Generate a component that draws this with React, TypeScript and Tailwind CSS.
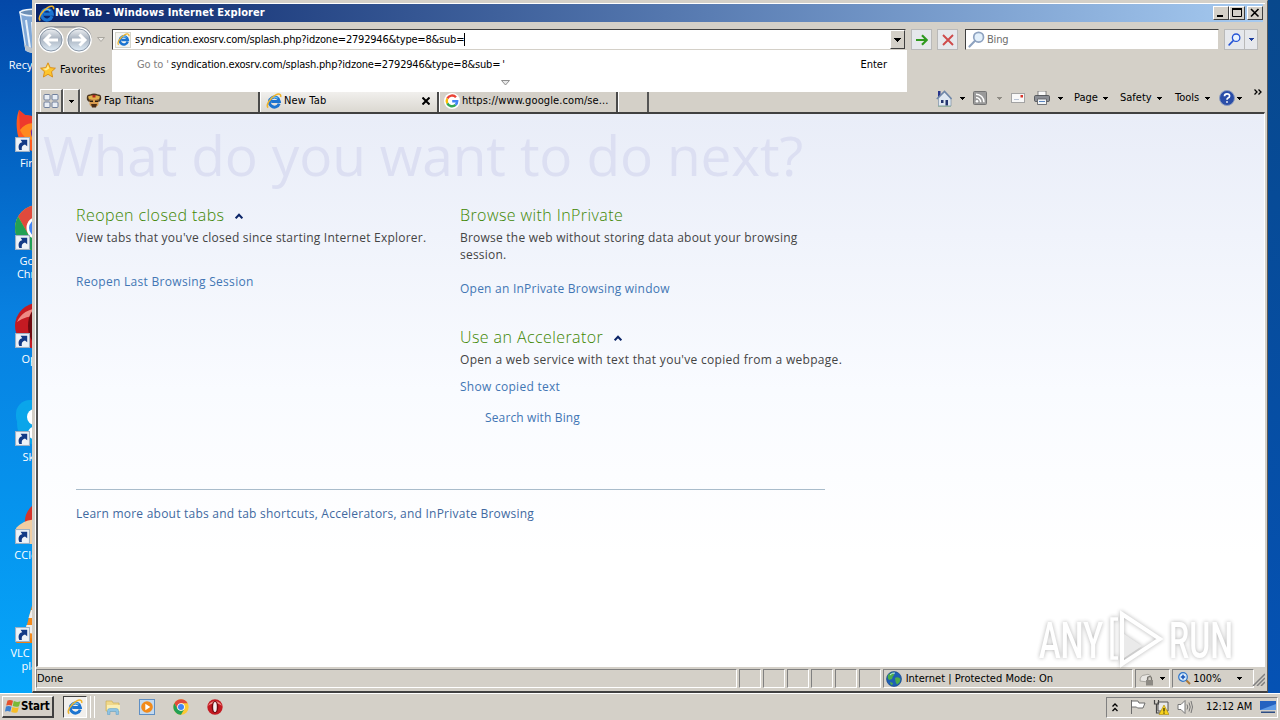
import React from 'react';

const tahoma = "font-['DejaVu_Sans_Condensed','DejaVu_Sans',sans-serif]";
const segoe = "font-['Open_Sans','Noto_Sans',sans-serif]";

/* ---------- icons ---------- */

const IeIcon: React.FC<{ className?: string }> = ({ className = 'w-4 h-4' }) => (
  <svg viewBox="0 0 16 16" className={className} fill="none">
    <path d="M13.2 10.6A5 5 0 1 1 13.4 8.6H5.2" stroke="#1c74d0" strokeWidth="3" />
    <path d="M4.2 7A4.6 4.6 0 0 1 11.6 5.4" stroke="#6cc6f6" strokeWidth="1.2" />
    <path d="M2.2 14.6C-.6 12.6 3.6 5.4 9.4 2.2C12.6.4 15.4.8 14.6 4" stroke="#f0b42a" strokeWidth="1.5" />
  </svg>
);

const ChromeIcon: React.FC<{ className?: string }> = ({ className = 'w-4 h-4' }) => (
  <svg viewBox="0 0 48 48" className={className}>
    <circle cx="24" cy="24" r="23" fill="#fcc934" />
    <path d="M4.1 12.5A23 23 0 0 1 43.9 12.5H24L14 30Z" fill="#e04a3c" />
    <path d="M4.1 12.5A23 23 0 0 0 24 47L34 29.8L24 35L14 29.8Z" fill="#22a055" />
    <circle cx="24" cy="24" r="11.5" fill="#fff" />
    <circle cx="24" cy="24" r="9" fill="#4285f4" />
  </svg>
);

const OperaIcon: React.FC<{ className?: string }> = ({ className = 'w-4 h-4' }) => (
  <svg viewBox="0 0 48 48" className={className}>
    <circle cx="24" cy="24" r="23" fill="#c41a22" />
    <path d="M3 20A23 23 0 0 1 45 20A30 22 0 0 0 3 20Z" fill="#ee8a84" />
    <ellipse cx="24" cy="24" rx="10" ry="18" fill="#6d0a10" />
    <ellipse cx="24" cy="24" rx="5.5" ry="15" fill="#f4f0f0" />
  </svg>
);

const RecycleBinIcon = () => (
  <svg viewBox="0 0 48 48" className="w-12 h-12">
    <path d="M6 4L42 4L36 42Q24 48 12 42Z" fill="#a9c6e4" fillOpacity=".75" stroke="#dce9f5" strokeWidth="1.5" />
    <ellipse cx="24" cy="4.5" rx="18" ry="3.5" fill="#6d8fb5" stroke="#eef5fc" strokeWidth="1.5" />
    <path d="M12 12L16 40M18 14L20 42" stroke="#e8f1fa" strokeWidth="2" />
    <path d="M10 36Q24 46 38 36L36 43Q24 48 12 43Z" fill="#b9c2cb" />
  </svg>
);

const FirefoxIcon = () => (
  <svg viewBox="0 0 48 48" className="w-12 h-12">
    <path d="M3 24C2 16 3 9 5 4L11 9L18 10C24 4 34 4 40 12C48 24 44 46 24 46C12 46 4 36 3 24Z" fill="#ff5a1f" />
    <path d="M5 4L11 9L18 10L22 16L6 24Z" fill="#ee3a2c" />
    <path d="M6 24Q14 14 24 19L16 25L20 34Q10 34 6 24Z" fill="#ff8a1e" />
    <circle cx="26" cy="27" r="9" fill="#5a2fb0" />
  </svg>
);

const SkypeIcon = () => (
  <svg viewBox="0 0 48 48" className="w-12 h-12">
    <rect x="2" y="0" width="30" height="30" rx="14" fill="#0aa5ea" />
    <circle cx="24" cy="24" r="21" fill="#0aa5ea" />
    <circle cx="21" cy="17" r="8" fill="#fff" />
    <circle cx="20" cy="33" r="6" fill="#fff" />
  </svg>
);

const CCleanerIcon = () => (
  <svg viewBox="0 0 48 48" className="w-12 h-12">
    <path d="M42 10A17 17 0 1 0 42 38" fill="none" stroke="#d5342b" strokeWidth="9" />
    <path d="M2 30Q12 20 22 22L30 34L20 46H6Z" fill="#f1cda2" />
  </svg>
);

const VlcIcon = () => (
  <svg viewBox="0 0 48 48" className="w-12 h-12">
    <path d="M8 36L40 36L46 47H2Z" fill="#f08010" />
    <path d="M20 2H28L38 40Q24 46 10 40Z" fill="#f58a1c" />
    <path d="M17 14H31L33.500 22H14.500ZM12.500 29H35.500L37 36Q24 40 11 36Z" fill="#eee" />
  </svg>
);

const ShortcutArrow = () => (
  <svg viewBox="0 0 14 14" className="absolute left-[1px] top-[31px] w-[15px] h-[15px]">
    <rect x=".5" y=".5" width="13" height="13" fill="#eef3f8" stroke="#9fb1c4" />
    <path d="M4 12.200C2.400 8 4 5.300 6.800 4.800L5.200 2.600H11.400V8.600L9.300 6.900C7 7.600 5.800 9 6.400 12.200Z" fill="#123a86" />
  </svg>
);

const NavButtons = () => (
  <svg viewBox="0 0 56 28" className="w-14 h-7">
    <defs>
      <linearGradient id="orb" x1="0" y1="0" x2="0" y2="1">
        <stop offset="0" stopColor="#f4f6f8" />
        <stop offset=".45" stopColor="#a9b3c0" />
        <stop offset="1" stopColor="#e4f1fb" />
      </linearGradient>
    </defs>
    <path d="M2 12Q4 1 14 1H42Q52 1 54 12" fill="none" stroke="#8c8f94" strokeWidth="1.500" />
    <circle cx="14" cy="14" r="12" fill="url(#orb)" stroke="#fff" strokeWidth="1.500" />
    <circle cx="42" cy="14" r="12" fill="url(#orb)" stroke="#fff" strokeWidth="1.500" />
    <circle cx="14" cy="14" r="11" fill="none" stroke="#8b98a8" strokeWidth="1" />
    <circle cx="42" cy="14" r="11" fill="none" stroke="#8b98a8" strokeWidth="1" />
    <path d="M21 14H8M13.500 8.500L8 14L13.500 19.500M35 14H48M42.500 8.500L48 14L42.500 19.500" fill="none" stroke="#fff" strokeWidth="3" />
  </svg>
);

const Caret: React.FC<{ className?: string }> = ({ className = 'text-black' }) => (
  <svg viewBox="0 0 5 3" className={`w-[5px] h-[3px] shrink-0 ${className}`} shapeRendering="crispEdges">
    <path d="M0 0H5V1H4V2H3V3H2V2H1V1H0Z" fill="currentColor" />
  </svg>
);

const Magnifier: React.FC<{ className: string; color: string; glass: string }> = ({ className, color, glass }) => (
  <svg viewBox="0 0 16 16" className={className} fill="none">
    <circle cx="10" cy="5.800" r="4.600" fill={glass} stroke={color} strokeWidth="1.600" />
    <path d="M6.600 9.200L1.400 14.600" stroke={color} strokeWidth="2" strokeLinecap="round" />
  </svg>
);

const StarIcon = () => (
  <svg viewBox="0 0 16 16" className="w-4 h-4">
    <path d="M8 .8L10.200 5.600L15.400 6.200L11.500 9.700L12.600 15L8 12.300L3.400 15L4.500 9.700L.6 6.200L5.800 5.600Z" fill="#fdc62e" stroke="#d98a12" strokeWidth=".9" />
    <path d="M8 2.800L9.300 6.400L6 8.500L2.800 6.800L6.400 6.300Z" fill="#ffec9a" />
  </svg>
);

const QuickTabsIcon = () => (
  <svg viewBox="0 0 16 14" className="w-4 h-3.5" fill="#e8edf4" stroke="#6f7f9c">
    <rect x="1" y=".5" width="6" height="5.500" rx="1" />
    <rect x="9" y=".5" width="6" height="5.500" rx="1" />
    <rect x="1" y="8" width="6" height="5.500" rx="1" />
    <rect x="9" y="8" width="6" height="5.500" rx="1" />
  </svg>
);

const TitanIcon = () => (
  <svg viewBox="0 0 16 16" className="w-4 h-4">
    <path d="M1 7Q0 1 4 1.500Q8-.5 12 1.500Q16 1 15 7L13 9H3Z" fill="#4a3420" />
    <path d="M2 3.500Q8 1 14 3.500L13 6.500H3Z" fill="#e0b04a" />
    <rect x="3.500" y="6" width="9" height="7.500" rx="3" fill="#d79a4e" />
    <path d="M4 7.500H7V9H4ZM9 7.500H12V9H9Z" fill="#2a1c12" />
    <path d="M5 11H11L10 14.500H6Z" fill="#4b2d18" />
    <path d="M6.500 2H9.500V4.500H6.500Z" fill="#b3261e" />
  </svg>
);

const GoogleIcon = () => (
  <svg viewBox="0 0 16 16" className="w-4 h-4">
    <circle cx="8" cy="8" r="8" fill="#fff" />
    <g fill="none" strokeWidth="2.400">
      <path d="M12 4.200A5.300 5.300 0 0 0 3.300 5.600" stroke="#ea4335" />
      <path d="M3.300 5.600A5.300 5.300 0 0 0 3.300 10.400" stroke="#fbbc05" />
      <path d="M3.300 10.400A5.300 5.300 0 0 0 11.600 11.900" stroke="#34a853" />
      <path d="M11.600 11.900A5.300 5.300 0 0 0 13.200 8.200H8.200" stroke="#4285f4" />
    </g>
  </svg>
);

const HomeIcon = () => (
  <svg viewBox="0 0 16 17" className="w-4 h-[17px]">
    <path d="M2 1H4.500V6L2 8Z" fill="#27348b" />
    <path d="M8.500 1.500L15 8V16H2.500V8Z" fill="#dfe8f2" stroke="#7b8fa8" strokeWidth=".7" />
    <path d="M.8 9L8.500 1.500L15.500 9" fill="none" stroke="#6f87a8" strokeWidth="1.600" />
    <path d="M5 10H7.500V13H5ZM9.500 10H12V15.500H9.500Z" fill="#23356f" />
    <path d="M2 16.300H15" stroke="#8fae9a" />
  </svg>
);

const FeedIcon = () => (
  <svg viewBox="0 0 14 14" className="w-3.5 h-3.5" fill="none">
    <rect x=".5" y=".5" width="13" height="13" rx="1" fill="#9a9a9a" stroke="#757575" />
    <circle cx="4" cy="10.200" r="1.300" fill="#fff" />
    <path d="M3 6.500A4.700 4.700 0 0 1 7.700 11.300M3 3.200A8 8 0 0 1 11 11.300" stroke="#fff" strokeWidth="1.500" />
  </svg>
);

const MailIcon = () => (
  <svg viewBox="0 0 14 10" className="w-3.5 h-2.5">
    <rect x=".5" y=".5" width="13" height="9" fill="#f8f8f8" stroke="#a3a3a3" />
    <rect x="9.500" y="2" width="2.500" height="2.500" fill="#d8362c" />
    <path d="M3 6.500H8" stroke="#b9c4d6" />
  </svg>
);

const PrinterIcon = () => (
  <svg viewBox="0 0 16 14" className="w-4 h-3.5">
    <path d="M4 0H12V5H4Z" fill="#fafafa" stroke="#6b6b6b" strokeWidth=".8" />
    <rect x=".5" y="4.500" width="15" height="6" rx="1.200" fill="#8b8e95" stroke="#44474d" strokeWidth=".8" />
    <path d="M3.500 8H12.500V13.500H3.500Z" fill="#f2f5f8" stroke="#55585e" strokeWidth=".8" />
    <path d="M5 10.500H11" stroke="#5a86c0" />
  </svg>
);

const HelpIcon = () => (
  <svg viewBox="0 0 16 16" className="w-4 h-4">
    <circle cx="8" cy="8" r="7.500" fill="#2a4da8" stroke="#8c9cc0" />
    <path d="M5.500 6.200Q5.500 3.800 8 3.800Q10.600 3.800 10.600 6Q10.600 7.300 9 8.100Q8 8.700 8 9.800M8 11.200V12.800" fill="none" stroke="#fff" strokeWidth="1.700" />
  </svg>
);

const GlobeIcon = () => (
  <svg viewBox="0 0 16 16" className="w-4 h-4">
    <circle cx="8" cy="8" r="7.500" fill="#1e5fb4" stroke="#123f80" strokeWidth=".6" />
    <path d="M2 4Q5 1 8 1.500Q9 4 7 5L6 8L3 9Q1 7 2 4ZM9 7Q12 5 14.500 8Q14 12 11 13.500Q9 11 9 7ZM4 11L7 12L6 14.500Q4 13.500 4 11Z" fill="#4fae4a" />
    <path d="M4 4A6 6 0 0 1 9 2" stroke="#bfe4f8" fill="none" />
  </svg>
);

const WindowsFlag = () => (
  <svg viewBox="0 0 16 15" className="w-4 h-[15px]">
    <path d="M2.500 1.500Q5 .2 8 1.700L6.800 6.700Q4 5.300 1.200 6.600Z" fill="#e5512c" />
    <path d="M8.800 2.100Q12 3.600 15.400 2.200L14 7.200Q11 8.400 7.700 7Z" fill="#7ab938" />
    <path d="M1 7.600Q3.600 6.400 6.500 7.700L5.300 12.700Q2.500 11.300 -.1 12.600Z" fill="#3d80cf" />
    <path d="M7.400 8.100Q10.500 9.500 13.800 8.200L12.400 13.200Q9.500 14.400 6.200 13Z" fill="#f6bd26" />
  </svg>
);

const FolderIcon = () => (
  <svg viewBox="0 0 16 16" className="w-4 h-4">
    <path d="M1 2H7L8 4H14V12H1Z" fill="#f0d88a" stroke="#c7a94c" strokeWidth=".6" />
    <path d="M2 6H15V12H2Z" fill="#faeeb4" />
    <path d="M2.500 15.500V11.500Q2.500 9.500 5 9.500H11Q13.500 9.500 13.500 11.500V15.500H11V12.500H5V15.500Z" fill="#8fc4e4" stroke="#5d9fc6" strokeWidth=".5" />
  </svg>
);

const MediaPlayerIcon = () => (
  <svg viewBox="0 0 16 16" className="w-4 h-4">
    <rect x=".5" y=".5" width="15" height="15" fill="#c3d9ef" stroke="#5f8fc4" />
    <circle cx="8" cy="8" r="5.800" fill="#f28a1a" />
    <path d="M6.300 4.800L11.300 8L6.300 11.200Z" fill="#fff" />
  </svg>
);

/* ---------- desktop ---------- */

const shortcuts = [
  { label: 'Recycle Bin', icon: <RecycleBinIcon />, arrow: false },
  { label: 'Firefox', icon: <FirefoxIcon />, arrow: true },
  { label: 'Google Chrome', icon: <ChromeIcon className="w-12 h-12" />, arrow: true },
  { label: 'Opera', icon: <OperaIcon className="w-12 h-12" />, arrow: true },
  { label: 'Skype', icon: <SkypeIcon />, arrow: true },
  { label: 'CCleaner', icon: <CCleanerIcon />, arrow: true },
  { label: 'VLC media player', icon: <VlcIcon />, arrow: true },
];

const Desktop = () => (
  <div className="w-8 shrink-0 overflow-hidden bg-linear-to-b from-[#0448a8] via-[#0880e0] via-45% to-[#06a6fa]">
    {shortcuts.map((s) => (
      <div key={s.label} className="w-[75px] h-[98px] pt-2 flex flex-col items-center">
        <div className="relative w-12 h-[50px] shrink-0">
          {s.icon}
          {s.arrow && <ShortcutArrow />}
        </div>
        <span className={`${segoe} w-[62px] text-center text-[11px] leading-[13px] text-white`}>{s.label}</span>
      </div>
    ))}
  </div>
);

/* ---------- browser window ---------- */

const CaptionButton: React.FC<{ className?: string; children: React.ReactNode }> = ({ className = '', children }) => (
  <div className={`w-4 h-3.5 bg-[#d4d0c8] border border-t-white border-l-white border-r-[#404040] border-b-[#404040] ${className}`}>
    <svg viewBox="0 0 14 12" className="w-3.5 h-3" fill="none" stroke="#000">
      {children}
    </svg>
  </div>
);

const TitleBar = () => (
  <div className="h-[18px] mr-0.5 shrink-0 flex items-center pl-0.5 bg-linear-to-r from-[#0a246a] to-[#a6caf0]">
    <IeIcon className="w-[17px] h-[17px]" />
    <span className={`${tahoma} pt-px font-bold text-[11px] text-white whitespace-nowrap tracking-[0.07px]`}>
      New Tab - Windows Internet Explorer
    </span>
    <div className="ml-auto flex">
      <CaptionButton>
        <path d="M3 9H9" strokeWidth="2" />
      </CaptionButton>
      <CaptionButton>
        <path d="M2.500 2V9.500H11.500V2M2 2H12" strokeWidth="1" />
        <path d="M2 2H12" strokeWidth="2" />
      </CaptionButton>
      <CaptionButton className="ml-0.5">
        <path d="M3 2L10.500 9.500M10.500 2L3 9.500" strokeWidth="1.600" />
      </CaptionButton>
    </div>
  </div>
);

const SquareButton: React.FC<{ className: string; children: React.ReactNode }> = ({ className, children }) => (
  <div className={`h-[21px] flex items-center justify-center bg-[#e6e8ec] border border-[#b9b9b9] ${className}`}>{children}</div>
);

const AddressBar = () => (
  <div className="relative w-[794px] h-[21px] ml-[7px] flex items-center bg-white border border-[#404040] border-b-[#d4d0c8] border-r-[#d4d0c8]">
    <div className="w-4 h-4 ml-0.5 flex items-center justify-center bg-[#f4f4f0] border border-[#d5d5cc]">
      <IeIcon className="w-[13px] h-[13px]" />
    </div>
    <span className={`${tahoma} ml-[4px] pt-px text-[11px] whitespace-nowrap tracking-[-0.2px]`}>
      syndication.exosrv.com/splash.php?idzone=2792946&amp;type=8&amp;sub=
    </span>
    <div className="w-px h-[13px] bg-black" />
    <div className="ml-auto w-[15px] h-[19px] flex items-center justify-center bg-[#d4d0c8] border border-t-white border-l-white border-r-[#404040] border-b-[#404040]">
      <svg viewBox="0 0 7 4" className="w-[7px] h-1 shrink-0" shapeRendering="crispEdges">
        <path d="M0 0H7V1H6V2H5V3H4V4H3V3H2V2H1V1H0Z" />
      </svg>
    </div>

    {/* autocomplete popup */}
    <div className={`${tahoma} absolute z-10 -left-px top-[20px] w-[795px] h-[42px] bg-white text-[11px] leading-[14px]`}>
      <div className="flex items-center pt-2 pl-[25px] pr-5">
        <span className="text-[#808080] tracking-[-0.1px]">Go to '</span>
        <span className="ml-0.5 tracking-[-0.2px]">syndication.exosrv.com/splash.php?idzone=2792946&amp;type=8&amp;sub=</span>
        <span className="ml-0.5">'</span>
        <span className="ml-auto">Enter</span>
      </div>
      <svg viewBox="0 0 9 6" className="w-[9px] h-1.5 mt-2 ml-[389px]">
        <path d="M.5 .5H8.500L4.500 5Z" fill="#e8e8e8" stroke="#8f8f8f" />
      </svg>
    </div>
  </div>
);

const NavBar = () => (
  <div className="h-9 shrink-0 flex items-center pl-px pb-px">
    <NavButtons />
    <svg viewBox="0 0 8 5" className="w-2 h-[5px] ml-1">
      <path d="M.5 .5H7.500L4 4.500Z" fill="#eceae6" stroke="#aaa7a0" />
    </svg>
    <AddressBar />
    <SquareButton className="w-[21px] ml-[5px]">
      <svg viewBox="0 0 12 12" className="w-3 h-3" fill="none" stroke="#2f9a1f" strokeWidth="2.200">
        <path d="M0 6H10.500M6 1.200L10.800 6L6 10.800" />
      </svg>
    </SquareButton>
    <SquareButton className="w-[21px] ml-[5px]">
      <svg viewBox="0 0 12 12" className="w-3 h-3" fill="none" stroke="#cf4a4a" strokeWidth="1.900">
        <path d="M1 1L11 11M11 1L1 11" />
      </svg>
    </SquareButton>
    <div className="w-[254px] h-[21px] ml-[7px] flex items-center bg-white border border-[#404040] border-b-[#d4d0c8] border-r-[#d4d0c8]">
      <Magnifier className="w-[17px] h-[17px] ml-0.5" color="#8fa3c0" glass="#e3f0fb" />
      <span className={`${tahoma} ml-0.5 pt-0.5 text-[11px] text-[#6d6d6d] tracking-[-0.2px]`}>Bing</span>
    </div>
    <SquareButton className="w-[21px] ml-[5px]">
      <Magnifier className="w-[13px] h-[13px]" color="#2453d6" glass="#e8f2ff" />
    </SquareButton>
    <SquareButton className="w-[14px] -ml-px">
      <Caret className="text-[#1f3f9e]" />
    </SquareButton>
  </div>
);

const tabs = [
  { title: 'Fap Titans', icon: <TitanIcon />, active: false, width: 'w-[180px] pl-[5px]', text: 'pt-0.5' },
  { title: 'New Tab', icon: <IeIcon />, active: true, width: 'w-[179px] pl-[5px]', text: 'pt-px -ml-px tracking-[0.15px]' },
  { title: 'https://www.google.com/se...', icon: <GoogleIcon />, active: false, width: 'w-[179px] pl-[4px]', text: 'pt-0.5 tracking-[0.1px]' },
];

const TabStrip = () => (
  <div className={`${tahoma} flex items-end h-[23px] text-[11px] text-black`}>
    <div className="w-[23px] h-full ml-1 flex items-center justify-center border border-white border-b-0 border-r-2 border-r-[#555]">
      <QuickTabsIcon />
    </div>
    <div className="w-[17px] h-full flex items-center justify-center border-t border-l border-white border-r-2 border-r-[#555]">
      <Caret />
    </div>
    {tabs.map((tab) => (
      <div
        key={tab.title}
        className={`${tab.width} h-full flex items-center border-l border-l-white border-r-2 border-r-[#4a4a4a] ${
          tab.active ? 'bg-linear-to-b from-[#f4f3f1] to-[#dbd8d1]' : ''
        }`}
      >
        {tab.icon}
        <span className={`ml-[2px] whitespace-nowrap ${tab.text}`}>{tab.title}</span>
        {tab.active && (
          <svg viewBox="0 0 8 8" className="w-2 h-2 ml-auto mr-[7px]" stroke="#000" strokeWidth="2">
            <path d="M.5 .5L7.500 7.500M7.500 .5L.5 7.500" />
          </svg>
        )}
      </div>
    ))}
    <div className="w-[31px] h-full border-l border-l-white border-r-2 border-r-[#555]" />
  </div>
);

const CommandBar = () => (
  <div className={`${tahoma} ml-auto h-7 flex items-center text-[11px] text-black`}>
    <HomeIcon />
    <Caret className="ml-[8px]" />
    <div className="ml-[8px]"><FeedIcon /></div>
    <Caret className="ml-[10px] text-[#8f8c85]" />
    <div className="ml-[9px]"><MailIcon /></div>
    <div className="ml-[9px]"><PrinterIcon /></div>
    <Caret className="ml-[8px]" />
    <span className="ml-[11px] w-[25px]">Page</span>
    <Caret className="ml-1" />
    <span className="ml-[12px] w-[33px]">Safety</span>
    <Caret className="ml-[4px]" />
    <span className="ml-[13px] w-[26px]">Tools</span>
    <Caret className="ml-[4px]" />
    <div className="ml-[9px]"><HelpIcon /></div>
    <Caret className="ml-[2px]" />
    <svg viewBox="0 0 8 6" className="w-2 h-1.5 ml-3 mr-[3px] -mt-3" fill="none" stroke="#000" strokeWidth="1.300">
      <path d="M.5 .5L3 3L.5 5.500M4.500 .5L7 3L4.500 5.500" />
    </svg>
  </div>
);

const SectionTitle: React.FC<{ collapsible?: boolean; className?: string; children: React.ReactNode }> = ({
  collapsible,
  className = '',
  children,
}) => (
  <h2 className={`flex items-center text-[16px] leading-[22px] font-light text-[#3d8600] tracking-[0.42px] whitespace-nowrap ${className}`}>
    {children}
    {collapsible && (
      <svg viewBox="0 0 8 6" className="w-2 h-1.5 ml-[11px] mt-[2px]" fill="none" stroke="#0b2468" strokeWidth="2">
        <path d="M.7 5.300L4 1.800L7.300 5.300" />
      </svg>
    )}
  </h2>
);

const NewTabPage = () => (
  <div className={`${segoe} grow overflow-hidden bg-linear-to-b from-[#e9edf8] via-[#f9fbff] via-50% to-white to-80% text-[12px] leading-[17px] tracking-[0.23px] text-[#444]`}>
    <h1 className="h-[90px] pl-[5px] pt-[6px] text-[55px] leading-[70px] text-[#dcdff2] whitespace-nowrap tracking-[-0.15px]">
      What do you want to do next?
    </h1>
    <div className="flex pl-[38px]">
      <div className="w-[384px]">
        <SectionTitle collapsible>Reopen closed tabs</SectionTitle>
        <p className="mt-[3px] whitespace-nowrap">View tabs that you've closed since starting Internet Explorer.</p>
        <p className="mt-[27px] tracking-[0.3px] text-[#4276b4]">Reopen Last Browsing Session</p>
      </div>
      <div>
        <SectionTitle>Browse with InPrivate</SectionTitle>
        <p className="mt-[3px] whitespace-nowrap">
          Browse the web without storing data about your browsing
          <br />
          session.
        </p>
        <p className="mt-[17px] text-[#4276b4]">Open an InPrivate Browsing window</p>
        <SectionTitle collapsible className="mt-[29px]">Use an Accelerator</SectionTitle>
        <p className="mt-[3px] whitespace-nowrap tracking-[0.3px]">Open a web service with text that you've copied from a webpage.</p>
        <p className="mt-[10px] tracking-[0.28px] text-[#4276b4]">Show copied text</p>
        <p className="mt-[14px] pl-[25px] tracking-[0.13px] text-[#4276b4]">Search with Bing</p>
      </div>
    </div>
    <div className="w-[749px] mt-[63px] ml-[38px] pt-[15px] border-t border-[#a9bccb] text-[#41699f]">
      Learn more about tabs and tab shortcuts, Accelerators, and InPrivate Browsing
    </div>
  </div>
);

const StatusCell: React.FC<{ className: string; children?: React.ReactNode }> = ({ className, children }) => (
  <div className={`h-[19px] flex items-center border border-[#808080] border-r-white border-b-white ${className}`}>{children}</div>
);

const StatusBar = () => (
  <div className={`${tahoma} h-5 mt-[2px] shrink-0 flex items-start gap-[2px] text-[11px] text-black whitespace-nowrap`}>
    <StatusCell className="w-[702px]">
      <span className="pt-px">Done</span>
    </StatusCell>
    {[0, 1, 2, 3, 4, 5].map((i) => (
      <StatusCell key={i} className="w-[22px]" />
    ))}
    <StatusCell className="w-[251px] pl-0.5">
      <GlobeIcon />
      <span className="ml-1 pt-px tracking-[0.02px]">Internet | Protected Mode: On</span>
    </StatusCell>
    <StatusCell className="w-[35px] pl-[3px]">
      <svg viewBox="0 0 16 14" className="w-4 h-3.5">
        <path d="M1 9Q1 3 6 3Q9 1 12 4L9 6V10Z" fill="#e9e7e3" stroke="#9b9892" strokeWidth=".8" />
        <path d="M8.500 8V6.500Q8.500 4.500 10.500 4.500Q12.500 4.500 12.500 6.500V8" fill="none" stroke="#77746e" strokeWidth="1.200" />
        <rect x="7" y="8" width="7" height="5.500" fill="#8d8a84" />
      </svg>
      <Caret className="ml-[5px]" />
    </StatusCell>
    <StatusCell className="w-[82px] pl-[5px]">
      <svg viewBox="0 0 13 13" className="w-[13px] h-[13px]" fill="none">
        <path d="M8 8L12 12" stroke="#b07a35" strokeWidth="2" />
        <circle cx="5" cy="5" r="4.300" fill="#d9ecfb" stroke="#2e74c9" strokeWidth="1.200" />
        <path d="M5 2.800V7.200M2.800 5H7.200" stroke="#1653b8" strokeWidth="1.500" />
      </svg>
      <span className="ml-0.5 pt-px">100%</span>
      <Caret className="ml-auto mr-[11px]" />
    </StatusCell>
    <svg viewBox="0 0 13 13" className="w-[13px] h-[13px] mt-1 -ml-1" stroke="#808080" strokeWidth="1.500">
      <path d="M13 1L1 13M13 5L5 13M13 9L9 13" />
    </svg>
  </div>
);

const BrowserWindow = () => (
  <div className="w-[1236px] h-[693px] shrink-0 flex flex-col pt-0.5 px-0.5 bg-[#d4d0c8] border-l border-r border-t border-b-2 border-l-[#d4d0c8] border-t-[#d4d0c8] border-r-[#5a5a5a] border-b-[#404040]">
    <div className="grow flex flex-col border-t border-l border-white">
      <TitleBar />
      <NavBar />
      <div className="flex h-6 shrink-0 items-center pl-1">
        <StarIcon />
        <span className={`${tahoma} ml-1 pt-px text-[11px] text-black tracking-[0.1px]`}>Favorites</span>
      </div>
      <div className="flex h-[30px] shrink-0 items-end">
        <TabStrip />
        <CommandBar />
      </div>
      <div className="h-[555px] shrink-0 flex flex-col border-t-2 border-l-2 border-b border-r border-t-[#404040] border-l-[#505050] border-b-white border-r-white">
        <NewTabPage />
      </div>
      <StatusBar />
    </div>
  </div>
);

/* ---------- taskbar ---------- */

const Taskbar = () => (
  <div className={`${tahoma} h-[27px] flex items-center bg-[#d4d0c8] border-t border-white pl-0.5 text-[11px] text-black`}>
    <div className="w-[52px] h-[22px] flex items-center pl-0.5 border border-t-white border-l-white border-r-2 border-b-2 border-r-[#404040] border-b-[#404040]">
      <WindowsFlag />
      <span className="pt-px font-bold text-[11.5px] tracking-[-0.2px]">Start</span>
    </div>
    <div className="w-[24px] h-[22px] ml-[9px] flex items-center justify-center bg-[#f1efec] border border-t-[#404040] border-l-[#404040] border-white">
      <IeIcon />
    </div>
    <div className="w-1 h-[22px] border-r border-white" />
    <div className="w-1 h-[22px] border-r border-white" />
    <div className="flex ml-[10px] gap-[18px]">
      <FolderIcon />
      <MediaPlayerIcon />
      <ChromeIcon />
      <OperaIcon />
    </div>
    <div className="ml-auto mr-[2px] w-[172px] h-[21px] flex items-center border border-[#808080] border-r-white border-b-white">
      <svg viewBox="0 0 6 9" className="w-1.5 h-[9px] ml-[5px]" fill="none" stroke="#000" strokeWidth="1.300">
        <path d="M.5 3.500L3 1L5.500 3.500M.5 8L3 5.500L5.500 8" />
      </svg>
      <svg viewBox="0 0 16 16" className="w-4 h-4 ml-[12px]" fill="#fff" stroke="#6d6d6d">
        <path d="M1.500 1V15M1.500 2H8L9 4H15L13 9H7.500L6.500 8H1.500" />
      </svg>
      <svg viewBox="0 0 16 16" className="w-4 h-4 ml-[7px]">
        <path d="M5 3H15V12H5Z" fill="#e9e9e9" stroke="#555" />
        <path d="M1.500 1V5H5.500V1M3.500 5V14H8" fill="none" stroke="#444" strokeWidth="1.200" />
        <path d="M11 6L16 15.500H6Z" fill="#f8d21c" stroke="#a88808" strokeWidth=".6" />
        <path d="M11 9V12.500M11 13.500V14.700" stroke="#000" />
      </svg>
      <svg viewBox="0 0 16 16" className="w-4 h-4 ml-[8px]" fill="none" stroke="#777">
        <path d="M1 5.500H4L8 1.500V14.500L4 10.500H1Z" fill="#fff" />
        <path d="M10 5.500Q11.500 8 10 10.500M12 3.500Q14.500 8 12 12.500M14 2Q17 8 14 14" />
      </svg>
      <span className="ml-[13px] pt-px whitespace-nowrap tracking-[-0.1px]">12:12 AM</span>
      <svg viewBox="0 0 16 12" className="w-4 h-3 ml-auto mr-[1px]">
        <rect width="16" height="9" fill="#2462c0" />
        <path d="M0 9L16 3V9Z" fill="#5e9be6" />
        <path d="M1 10.500H15V12H1Z" fill="#2c4d84" />
      </svg>
    </div>
  </div>
);

const Watermark = () => (
  <svg
    viewBox="0 0 210 70"
    className="absolute left-[1034px] top-[604px] w-[210px] h-[70px] drop-shadow-[0_0_2px_rgba(0,0,0,0.4)] opacity-75 font-['Roboto',sans-serif] font-medium"
  >
    <g fill="#fff" fontSize="50">
      <text x="5" y="54" textLength="64" lengthAdjust="spacingAndGlyphs">ANY</text>
      <text x="135" y="54" textLength="64" lengthAdjust="spacingAndGlyphs">RUN</text>
    </g>
    <g fill="none" stroke="#fff" strokeWidth="4">
      <path d="M88 10L126 35L88 60Z" />
      <path d="M84 15H78V54H84" strokeWidth="3.500" />
    </g>
    <path d="M90 30L108 42L90 54Z" fill="#e4e4e4" />
  </svg>
);

export default function App() {
  return (
    <div className="relative w-[1280px] h-[720px] overflow-hidden">
      <div className="flex h-[693px]">
        <Desktop />
        <BrowserWindow />
        <div className="grow bg-linear-to-b from-[#08488c] to-[#0552b4]" />
      </div>
      <Taskbar />
      <Watermark />
    </div>
  );
}
